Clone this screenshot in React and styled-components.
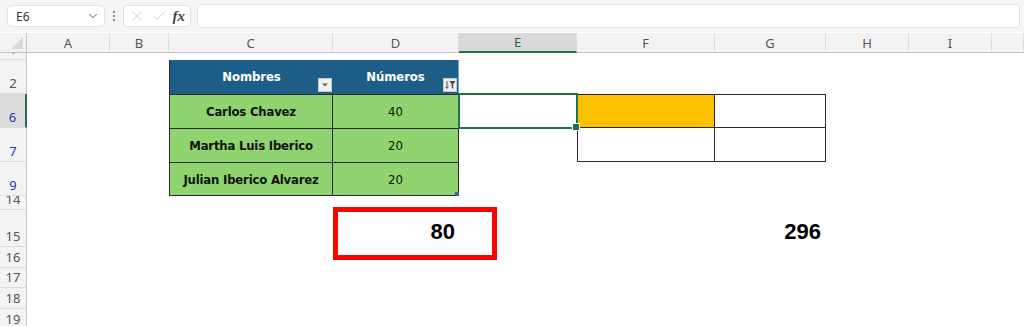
import React from "react";
import styled, { createGlobalStyle } from "styled-components";
import { X, Check, ChevronDown } from "lucide-react";

const GlobalStyle = createGlobalStyle`
  html, body {
    margin: 0;
    padding: 0;
    background: #ffffff;
    overflow: hidden;
  }
  body {
    font-family: "Noto Sans", "Open Sans", sans-serif;
  }
`;

const COLUMNS = ["A", "B", "C", "D", "E", "F", "G", "H", "I", ""];
const WIDTHS = [27, 83, 59, 164, 126, 118, 138, 111, 83, 83, 32];
const ROWS = [
  { n: "1", h: 7 },
  { n: "2", h: 34 },
  { n: "6", h: 34, filtered: true, active: true },
  { n: "7", h: 34, filtered: true },
  { n: "9", h: 34, filtered: true },
  { n: "14", h: 14 },
  { n: "15", h: 37 },
  { n: "16", h: 21 },
  { n: "17", h: 20 },
  { n: "18", h: 21 },
  { n: "19", h: 21 },
];

const Page = styled.div`
  width: 1024px;
  height: 326px;
  display: flex;
  flex-direction: column;
  background: #ffffff;
  overflow: hidden;
`;

const FormulaBar = styled.div`
  flex-shrink: 0;
  height: 32px;
  display: flex;
  align-items: center;
  padding: 0 4px 0 7px;
  gap: 4px;
  background: #f5f5f5;
  box-sizing: border-box;
  margin-bottom: 1px;
`;

const NameBox = styled.div`
  width: 98px;
  height: 22px;
  box-sizing: border-box;
  background: #ffffff;
  border: 1px solid #e1e1e1;
  border-radius: 4px;
  display: flex;
  align-items: center;
  justify-content: space-between;
  padding: 0 4px 0 8px;
  font-size: 12px;
  color: #333;
`;

const Dots = styled.div`
  width: 10px;
  display: flex;
  flex-direction: column;
  align-items: center;
  gap: 2px;
  span {
    width: 2px;
    height: 2px;
    background: #666;
    border-radius: 1px;
  }
`;

const FuncBox = styled.div`
  width: 68px;
  height: 22px;
  box-sizing: border-box;
  background: #ffffff;
  border: 1px solid #e1e1e1;
  border-radius: 4px;
  display: flex;
  align-items: center;
  justify-content: space-around;
  padding: 0 2px;
  color: #c9c9c9;
`;

const Fx = styled.span`
  font-family: "Liberation Serif", serif;
  font-style: italic;
  font-weight: bold;
  font-size: 15px;
  color: #444;
`;

const FormulaInput = styled.div`
  flex: 1;
  height: 22px;
  margin-left: 2px;
  background: #ffffff;
  border: 1px solid #e1e1e1;
  border-radius: 4px;
`;

const Sheet = styled.div`
  flex-shrink: 0;
  display: grid;
  grid-template-columns: ${WIDTHS.map((w) => w + "px").join(" ")};
  grid-template-rows: 20px ${ROWS.map((r) => r.h + "px").join(" ")};
`;

const Corner = styled.div`
  background: #f3f3f3;
  border-bottom: 1px solid #c4c4c4;
  border-right: 1px solid #c4c4c4;
  box-sizing: border-box;
  position: relative;
  overflow: hidden;
  &::after {
    content: "";
    position: absolute;
    right: 3px;
    bottom: 3px;
    border-style: solid;
    border-width: 0 0 12px 12px;
    border-color: transparent transparent #d8d8d8 transparent;
  }
`;

const ColHeader = styled.div`
  background: ${(p) => (p.$active ? "#d9d9d9" : "#f3f3f3")};
  color: ${(p) => (p.$active ? "#1e6b41" : "#555")};
  border-right: 1px solid #dcdcdc;
  border-bottom: ${(p) => (p.$active ? "2px solid #217346" : "1px solid #c4c4c4")};
  box-sizing: border-box;
  font-size: 13px;
  display: flex;
  align-items: center;
  justify-content: center;
`;

const RowHeader = styled.div`
  background: ${(p) => (p.$active ? "#dcdcdc" : "#f3f3f3")};
  color: ${(p) => (p.$filtered ? "#2233c8" : "#555")};
  border-right: ${(p) => (p.$active ? "2px solid #217346" : "1px solid #c4c4c4")};
  border-bottom: 1px solid #dedede;
  box-sizing: border-box;
  font-size: 13px;
  display: flex;
  align-items: flex-end;
  justify-content: center;
  line-height: 1;
  padding-bottom: 3px;
  overflow: hidden;
`;

const Cell = styled.div`
  position: relative;
  box-sizing: border-box;
  background: ${(p) => p.$bg || "transparent"};
  border-right: ${(p) => (p.$br ? `1px solid ${p.$br}` : "none")};
  border-bottom: ${(p) => (p.$bb ? `1px solid ${p.$bb}` : "none")};
  border-left: ${(p) => (p.$bl ? `1px solid ${p.$bl}` : "none")};
  border-top: ${(p) => (p.$bt ? `1px solid ${p.$bt}` : "none")};
  display: flex;
  align-items: center;
  justify-content: ${(p) => p.$justify || "center"};
  z-index: ${(p) => p.$z || 0};
`;

const TableHead = styled.span`
  font-family: "Liberation Sans Narrow", "DejaVu Sans Condensed", Roboto, sans-serif;
  font-weight: bold;
  font-size: 13px;
  letter-spacing: -0.1px;
  color: #ffffff;
  margin-top: -2px;
`;

const TableText = styled.span`
  font-family: "Liberation Sans Narrow", "DejaVu Sans Condensed", Roboto, sans-serif;
  font-weight: ${(p) => (p.$bold ? "bold" : "normal")};
  font-size: 13px;
  letter-spacing: ${(p) => (p.$bold ? "-0.2px" : "0")};
  color: #111;
`;

const FilterButton = styled.div`
  position: absolute;
  right: 1px;
  bottom: 2px;
  width: 14px;
  height: 14px;
  box-sizing: border-box;
  background: #f1f1f1;
  border: 1px solid #c8c8c8;
  display: flex;
  align-items: center;
  justify-content: center;
`;

const Selection = styled.div`
  position: absolute;
  inset: -1px -1px -1px -1px;
  border: 2px solid #217346;
  pointer-events: none;
`;

const FillHandle = styled.div`
  position: absolute;
  right: -4px;
  bottom: -4px;
  width: 6px;
  height: 6px;
  background: #217346;
  border: 1px solid #ffffff;
`;

const ResizeMark = styled.div`
  position: absolute;
  right: -1px;
  bottom: -1px;
  width: 4px;
  height: 4px;
  background: #3a62a8;
`;

const Total = styled.span`
  font-family: "Liberation Sans", Arial, sans-serif;
  font-weight: bold;
  font-size: 22px;
  color: #000;
  padding-right: ${(p) => p.$pad || 4}px;
  margin-top: 6px;
`;

const RedBox = styled.div`
  position: absolute;
  left: 0;
  top: -3px;
  width: 164px;
  height: 53px;
  box-sizing: border-box;
  border: 5px solid #ff0000;
  pointer-events: none;
`;

const BLUE = "#1d5d87";
const GREEN = "#8fd46f";
const LINE = "#2a2a2a";

const people = [
  { name: "Carlos Chavez", value: 40 },
  { name: "Martha Luis Iberico", value: 20 },
  { name: "Julian Iberico Alvarez", value: 20 },
];

function DropArrow() {
  return (
    <svg width="8" height="6" viewBox="0 0 8 6">
      <path d="M1 1.5 L4 4.5 L7 1.5 Z" fill="#666" />
    </svg>
  );
}

function FilterIcon() {
  return (
    <svg width="11" height="10" viewBox="0 0 11 10">
      <path d="M2 1 V8 M0.6 6.6 L2 8.5 L3.4 6.6" stroke="#555" strokeWidth="1" fill="none" />
      <path d="M4.5 1 H10.5 L8.2 4.2 V9 L6.8 8 V4.2 Z" fill="#444" />
    </svg>
  );
}

function renderCell(rowIdx, colIdx) {
  const key = `${rowIdx}-${colIdx}`;
  // row 2 -> table header
  if (rowIdx === 1 && colIdx === 2) {
    return (
      <Cell key={key} $bg={BLUE} $bl={LINE}>
        <TableHead>Nombres</TableHead>
        <FilterButton>
          <DropArrow />
        </FilterButton>
      </Cell>
    );
  }
  if (rowIdx === 1 && colIdx === 3) {
    return (
      <Cell key={key} $bg={BLUE} $br="#6fa8d8">
        <TableHead>Números</TableHead>
        <FilterButton>
          <FilterIcon />
        </FilterButton>
      </Cell>
    );
  }
  const p = people[rowIdx - 2];
  if (p && colIdx === 2) {
    return (
      <Cell key={key} $bg={GREEN} $bl={LINE} $br={LINE} $bt={LINE} $bb={rowIdx === 4 ? LINE : null}>
        <TableText $bold>{p.name}</TableText>
      </Cell>
    );
  }
  if (p && colIdx === 3) {
    return (
      <Cell key={key} $bg={GREEN} $br={LINE} $bt={LINE} $bb={rowIdx === 4 ? LINE : null}>
        <TableText>{p.value}</TableText>
        {rowIdx === 4 && <ResizeMark />}
      </Cell>
    );
  }
  // E6 selected cell
  if (rowIdx === 2 && colIdx === 4) {
    return (
      <Cell key={key} $z={2}>
        <Selection>
          <FillHandle />
        </Selection>
      </Cell>
    );
  }
  // F6 / G6 / F7 / G7 bordered cells
  if ((rowIdx === 2 || rowIdx === 3) && (colIdx === 5 || colIdx === 6)) {
    return (
      <Cell
        key={key}
        $bg={rowIdx === 2 && colIdx === 5 ? "#ffc000" : null}
        $bl={colIdx === 5 ? LINE : null}
        $bt={rowIdx === 2 ? LINE : null}
        $br={LINE}
        $bb={LINE}
      />
    );
  }
  // row 15 totals
  if (rowIdx === 6 && colIdx === 3) {
    return (
      <Cell key={key} $justify="flex-end" $z={3}>
        <Total $pad={4}>80</Total>
        <RedBox />
      </Cell>
    );
  }
  if (rowIdx === 6 && colIdx === 6) {
    return (
      <Cell key={key} $justify="flex-end">
        <Total $pad={5}>296</Total>
      </Cell>
    );
  }
  return <Cell key={key} />;
}

export default function App() {
  return (
    <Page>
      <GlobalStyle />
      <FormulaBar>
        <NameBox>
          <span>E6</span>
          <ChevronDown size={14} color="#555" strokeWidth={1.6} />
        </NameBox>
        <Dots>
          <span />
          <span />
          <span />
        </Dots>
        <FuncBox>
          <X size={16} strokeWidth={1.3} />
          <Check size={16} strokeWidth={1.3} />
          <Fx>fx</Fx>
        </FuncBox>
        <FormulaInput />
      </FormulaBar>
      <Sheet>
        <Corner />
        {COLUMNS.map((c, i) => (
          <ColHeader key={"h" + i} $active={c === "E"}>
            {c}
          </ColHeader>
        ))}
        {ROWS.map((r, ri) => (
          <React.Fragment key={r.n}>
            <RowHeader $filtered={r.filtered} $active={r.active}>
              {r.n}
            </RowHeader>
            {COLUMNS.map((_, ci) => renderCell(ri, ci))}
          </React.Fragment>
        ))}
      </Sheet>
    </Page>
  );
}
